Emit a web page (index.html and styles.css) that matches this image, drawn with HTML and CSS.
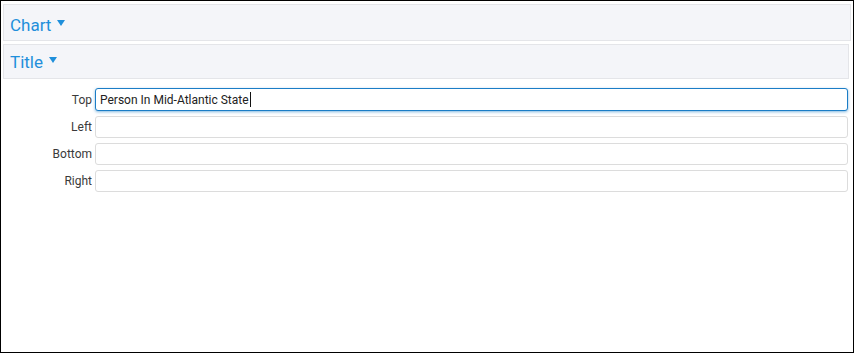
FILE: index.html
```html
<!DOCTYPE html>
<html lang="en">
<head>
<meta charset="utf-8">
<title>Chart settings</title>
<link rel="stylesheet" href="styles.css">
</head>
<body>
<div class="frame">
  <div class="section-header section-chart">
    <span class="section-title">Chart</span>
    <svg class="caret-icon" width="8" height="6" viewBox="0 0 8 6"><polygon points="0,0 8,0 4,6" fill="#1f8fdb"/></svg>
  </div>
  <div class="section-header section-title-panel">
    <span class="section-title">Title</span>
    <svg class="caret-icon" width="8" height="6" viewBox="0 0 8 6"><polygon points="0,0 8,0 4,6" fill="#1f8fdb"/></svg>
  </div>
  <div class="form">
    <label class="field-label">Top</label>
    <div class="field field-focused"><span class="field-text">Person In Mid-Atlantic State</span><span class="text-caret"></span></div>
    <label class="field-label">Left</label>
    <div class="field"></div>
    <label class="field-label">Bottom</label>
    <div class="field"></div>
    <label class="field-label">Right</label>
    <div class="field"></div>
  </div>
</div>
</body>
</html>
```
FILE: styles.css
```css
html, body {
  margin: 0;
  padding: 0;
  background: #fff;
}
body {
  font-family: Roboto, "Liberation Sans", sans-serif;
}
.frame {
  width: 854px;
  height: 353px;
  box-sizing: border-box;
  border: 1px solid #000;
  padding: 3px 2px 0 2px;
  display: flex;
  flex-direction: column;
}
.section-header {
  box-sizing: border-box;
  display: flex;
  align-items: flex-start;
  gap: 6px;
  background: #f4f5f9;
  border: 1px solid #e4e5e9;
  padding-left: 6px;
  color: #1f8fdb;
  font-size: 17px;
}
.section-chart {
  height: 37px;
  padding-top: 10px;
}
.section-title-panel {
  height: 35px;
  margin-top: 3px;
  margin-right: 2px;
  padding-top: 7px;
}
.section-title {
  display: block;
  line-height: 20px;
}
.caret-icon {
  display: block;
  margin-top: 5px;
}
.form {
  margin-top: 9px;
  padding-right: 3px;
  display: grid;
  grid-template-columns: 89px 1fr;
  column-gap: 3px;
  row-gap: 5px;
  align-items: center;
}
.field-label {
  text-align: right;
  font-size: 12px;
  color: #3a3a3a;
}
.field {
  box-sizing: border-box;
  height: 22px;
  border: 1px solid #dcdcdc;
  border-radius: 3px;
  padding: 0 4px;
  display: flex;
  align-items: center;
  font-size: 12px;
  color: #222;
  background: #fff;
}
.field-focused {
  height: 23px;
  border-color: #1b7dc6;
  box-shadow: 0 1px 3px rgba(27, 125, 198, 0.55);
}
.text-caret {
  display: block;
  width: 1px;
  height: 15px;
  background: #111;
  margin-left: 1px;
}
```
